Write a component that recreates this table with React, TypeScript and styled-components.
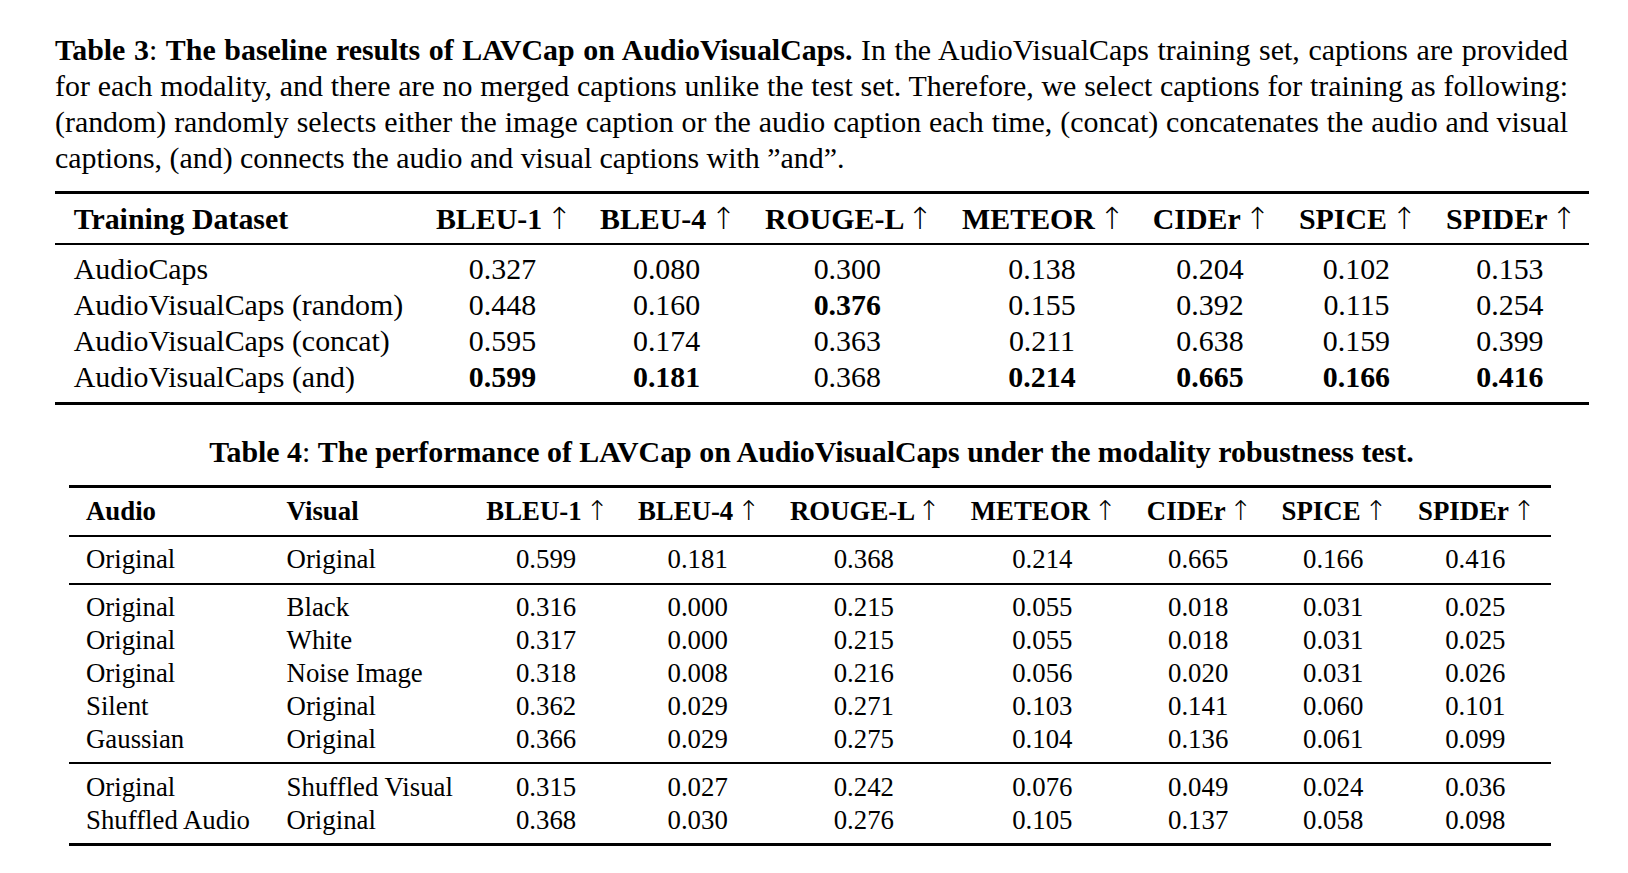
import React from "react";
import styled, { createGlobalStyle } from "styled-components";

const GlobalStyle = createGlobalStyle`
  html, body {
    margin: 0;
    padding: 0;
    background: #ffffff;
  }
  body {
    font-family: "Liberation Serif", "Times New Roman", "DejaVu Serif", serif;
    color: #000000;
  }
`;

const Page = styled.main`
  padding: 31.6px 0 0 55px;
  width: 1628px;
  box-sizing: border-box;
`;

const Caption = styled.p<{ $center?: boolean; $top?: number; $bottom?: number }>`
  margin: ${(p) => p.$top ?? 0}px 0 ${(p) => p.$bottom ?? 0}px 0;
  width: 1513px;
  font-size: 29.9px;
  line-height: 36.3px;
  text-align: ${(p) => (p.$center ? "center" : "justify")};
`;

const Strong = styled.b`
  font-weight: 700;
`;

const Table = styled.div<{ $width: number; $offset?: number; $size: number }>`
  width: ${(p) => p.$width}px;
  margin-left: ${(p) => p.$offset ?? 0}px;
  font-size: ${(p) => p.$size}px;
  border-top: 3px solid #000;
  border-bottom: 3px solid #000;
`;

const Section = styled.div<{ $padTop: number; $padBottom: number }>`
  border-top: 2px solid #000;
  padding: ${(p) => p.$padTop}px 0 ${(p) => p.$padBottom}px 0;
`;

const Row = styled.div<{ $cols: string; $height: number; $bold?: boolean }>`
  display: grid;
  grid-template-columns: ${(p) => p.$cols};
  height: ${(p) => p.$height}px;
  line-height: ${(p) => p.$height}px;
  font-weight: ${(p) => (p.$bold ? 700 : 400)};
  white-space: nowrap;
`;

const Cell = styled.div<{ $align?: "left" | "center"; $pad?: number; $bold?: boolean }>`
  text-align: ${(p) => p.$align ?? "center"};
  padding-left: ${(p) => p.$pad ?? 0}px;
  font-weight: ${(p) => (p.$bold ? 700 : "inherit")};
`;

const Arrow = styled.span`
  font-family: "DejaVu Sans ExtraLight", "DejaVu Sans", sans-serif;
  font-weight: 200;
  font-size: 1.02em;
  line-height: 0;
  margin: 0 -0.1em 0 -0.1em;
`;

const METRICS = ["BLEU-1", "BLEU-4", "ROUGE-L", "METEOR", "CIDEr", "SPICE", "SPIDEr"];

const T3_WIDTHS = [365, 165, 163.2, 198.2, 191.2, 144.8, 148.2, 158.8];
const T4_WIDTHS = [218.1, 183.4, 152.2, 151, 181.4, 175.6, 136, 134, 150.4];

const toCols = (w: number[]) => w.map((x) => `${x}px`).join(" ");
const sum = (w: number[]) => w.reduce((a, b) => a + b, 0);

const T3_COLS = toCols(T3_WIDTHS);
const T4_COLS = toCols(T4_WIDTHS);

type T3Row = { name: string; values: string[]; bold: number[] };

const table3: T3Row[] = [
  { name: "AudioCaps", values: ["0.327", "0.080", "0.300", "0.138", "0.204", "0.102", "0.153"], bold: [] },
  { name: "AudioVisualCaps (random)", values: ["0.448", "0.160", "0.376", "0.155", "0.392", "0.115", "0.254"], bold: [2] },
  { name: "AudioVisualCaps (concat)", values: ["0.595", "0.174", "0.363", "0.211", "0.638", "0.159", "0.399"], bold: [] },
  { name: "AudioVisualCaps (and)", values: ["0.599", "0.181", "0.368", "0.214", "0.665", "0.166", "0.416"], bold: [0, 1, 3, 4, 5, 6] },
];

type T4Row = { audio: string; visual: string; values: string[] };

const t4Sections: { padTop: number; padBottom: number; height: number; rows: T4Row[] }[] = [
  {
    padTop: 6.5,
    padBottom: 6.5,
    height: 33.2,
    rows: [{ audio: "Original", visual: "Original", values: ["0.599", "0.181", "0.368", "0.214", "0.665", "0.166", "0.416"] }],
  },
  {
    padTop: 5.6,
    padBottom: 5.6,
    height: 33.2,
    rows: [
      { audio: "Original", visual: "Black", values: ["0.316", "0.000", "0.215", "0.055", "0.018", "0.031", "0.025"] },
      { audio: "Original", visual: "White", values: ["0.317", "0.000", "0.215", "0.055", "0.018", "0.031", "0.025"] },
      { audio: "Original", visual: "Noise Image", values: ["0.318", "0.008", "0.216", "0.056", "0.020", "0.031", "0.026"] },
      { audio: "Silent", visual: "Original", values: ["0.362", "0.029", "0.271", "0.103", "0.141", "0.060", "0.101"] },
      { audio: "Gaussian", visual: "Original", values: ["0.366", "0.029", "0.275", "0.104", "0.136", "0.061", "0.099"] },
    ],
  },
  {
    padTop: 7,
    padBottom: 7.5,
    height: 32.3,
    rows: [
      { audio: "Original", visual: "Shuffled Visual", values: ["0.315", "0.027", "0.242", "0.076", "0.049", "0.024", "0.036"] },
      { audio: "Shuffled Audio", visual: "Original", values: ["0.368", "0.030", "0.276", "0.105", "0.137", "0.058", "0.098"] },
    ],
  },
];

const MetricHeads = () => (
  <>
    {METRICS.map((m) => (
      <Cell key={m}>
        {m} <Arrow>↑</Arrow>
      </Cell>
    ))}
  </>
);

export default function App() {
  return (
    <>
      <GlobalStyle />
      <Page>
        <Caption $bottom={14.7}>
          <Strong>Table 3</Strong>: <Strong>The baseline results of LAVCap on AudioVisualCaps.</Strong> In the
          AudioVisualCaps training set, captions are provided for each modality, and there are no merged captions
          unlike the test set. Therefore, we select captions for training as following: (random) randomly selects
          either the image caption or the audio caption each time, (concat) concatenates the audio and visual
          captions, (and) connects the audio and visual captions with ”and”.
        </Caption>

        <Table $width={sum(T3_WIDTHS)} $size={29.9}>
          <Row $cols={T3_COLS} $height={49} $bold>
            <Cell $align="left" $pad={18.7}>
              Training Dataset
            </Cell>
            <MetricHeads />
          </Row>
          <Section $padTop={5.5} $padBottom={7.5}>
            {table3.map((r) => (
              <Row key={r.name} $cols={T3_COLS} $height={36}>
                <Cell $align="left" $pad={18.7}>
                  {r.name}
                </Cell>
                {r.values.map((v, i) => (
                  <Cell key={i} $bold={r.bold.includes(i)}>
                    {v}
                  </Cell>
                ))}
              </Row>
            ))}
          </Section>
        </Table>

        <Caption $center $top={29} $bottom={14.7}>
          <Strong>Table 4</Strong>: <Strong>The performance of LAVCap on AudioVisualCaps under the modality robustness test.</Strong>
        </Caption>

        <Table $width={sum(T4_WIDTHS)} $offset={13.5} $size={26.8}>
          <Row $cols={T4_COLS} $height={46.5} $bold>
            <Cell $align="left" $pad={17.5}>
              Audio
            </Cell>
            <Cell $align="left">Visual</Cell>
            <MetricHeads />
          </Row>
          {t4Sections.map((s, si) => (
            <Section key={si} $padTop={s.padTop} $padBottom={s.padBottom}>
              {s.rows.map((r, ri) => (
                <Row key={ri} $cols={T4_COLS} $height={s.height}>
                  <Cell $align="left" $pad={17.5}>
                    {r.audio}
                  </Cell>
                  <Cell $align="left">{r.visual}</Cell>
                  {r.values.map((v, i) => (
                    <Cell key={i}>{v}</Cell>
                  ))}
                </Row>
              ))}
            </Section>
          ))}
        </Table>
      </Page>
    </>
  );
}
